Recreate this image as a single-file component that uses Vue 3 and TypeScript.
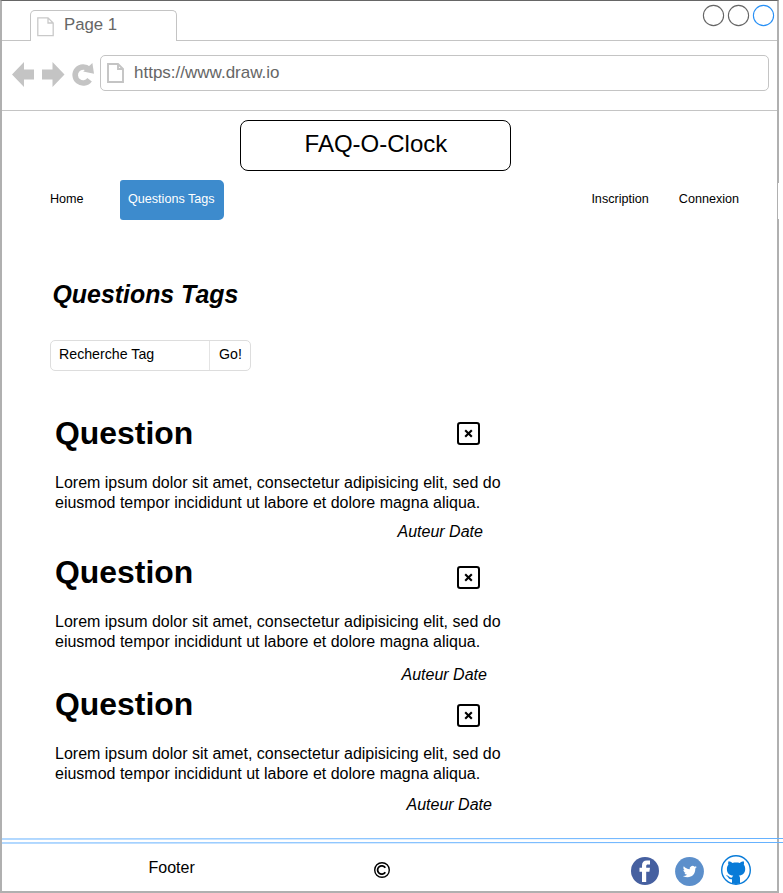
<script setup lang="ts">
interface Question {
  title: string
  body: string
  author: string
}

const body =
  'Lorem ipsum dolor sit amet, consectetur adipisicing elit, sed do eiusmod tempor incididunt ut labore et dolore magna aliqua.'

const questions: Question[] = [
  { title: 'Question', body, author: 'Auteur Date' },
  { title: 'Question', body, author: 'Auteur Date' },
  { title: 'Question', body, author: 'Auteur Date' },
]
</script>

<template>
  <div class="window">
    <header class="tabs">
      <div class="tab">
        <svg class="page-icon" width="17" height="20" viewBox="0 0 17 20">
          <path d="M.8.8H11L16.2 6V18.7H.8ZM11 .8V6H16.2" fill="none" stroke="#c9c9c9" stroke-width="1.3" />
        </svg>
        <span class="tab-title">Page 1</span>
      </div>
      <svg class="controls" width="73" height="28" viewBox="0 0 73 28">
        <g fill="none" stroke-width="1.1">
          <circle cx="11.5" cy="14.5" r="10.1" stroke="#666" />
          <circle cx="36.5" cy="14.5" r="10.1" stroke="#666" />
          <circle cx="61.5" cy="14.5" r="10.1" stroke="#2890f5" />
        </g>
      </svg>
    </header>

    <div class="toolbar">
      <svg class="nav-icons" width="84" height="26" viewBox="0 0 84 26">
        <g fill="#c4c4c4">
          <path d="M0 12.5 12 0V7.5H22V17.5H12V25Z" />
          <path d="M52.5 12.5 40.5 0V7.5H30V17.5H40.5V25Z" />
        </g>
        <path d="M76.8 7.3A8 8 0 1 0 77.6 17.8" fill="none" stroke="#c4c4c4" stroke-width="5.6" />
        <path d="M80.4 1 82 11.7 71.2 9.6Z" fill="#c4c4c4" />
      </svg>
      <div class="address">
        <svg class="page-icon" width="17" height="20" viewBox="0 0 17 20">
          <path d="M1 1H11L16 6V19H1ZM11 1V6H16" fill="none" stroke="#c4c4c4" stroke-width="1.9" />
        </svg>
        <span class="url">https://www.draw.io</span>
      </div>
    </div>

    <div class="brand">FAQ-O-Clock</div>

    <nav class="menu">
      <a class="home">Home</a>
      <a class="active">Questions Tags</a>
      <a class="signup">Inscription</a>
      <a class="login">Connexion</a>
      <i class="menu-end"></i>
    </nav>

    <main class="content">
      <h1>Questions Tags</h1>
      <div class="search">
        <span class="field">Recherche Tag</span>
        <span class="go">Go!</span>
      </div>
      <article v-for="(q, i) in questions" :key="i" class="question">
        <div class="head">
          <h2>{{ q.title }}</h2>
          <svg class="close" width="24" height="24" viewBox="0 0 24 24">
            <rect x="1" y="1" width="21" height="21" rx="2.2" fill="none" stroke="#000" stroke-width="2" />
            <path d="M8.2 8.2 14.8 14.8M14.8 8.2 8.2 14.8" stroke="#000" stroke-width="2.1" />
          </svg>
        </div>
        <p class="text">{{ q.body }}</p>
        <p class="author">{{ q.author }}</p>
      </article>
    </main>

    <footer class="footer">
      <svg class="rule" width="782" height="8" viewBox="0 0 782 8">
        <path d="M0 2 782 1.5M0 6 782 5.5" stroke="#66b2ff" stroke-width="1" />
      </svg>
      <div class="foot-row">
        <span class="foot-label">Footer</span>
        <svg class="copyright" width="18" height="18" viewBox="0 0 18 18">
          <g fill="none" stroke="#000">
            <circle cx="9" cy="9" r="7.3" stroke-width="1.4" />
            <path d="M12.3 6.7A4.2 4.2 0 1 0 12.3 11.3" stroke-width="1.8" />
          </g>
        </svg>
        <svg class="social facebook" width="28" height="28" viewBox="0 0 28 28">
          <circle cx="14" cy="14" r="14" fill="#4660a0" />
          <path d="M11 25V14.7H8.5V10.8H11V8.5C11 5 12.8 3.5 15.8 3.5H19V7.4H17C15.6 7.4 15.2 8 15.2 9.2V10.8H19L18.4 14.7H15.2V25Z" fill="#fff" />
        </svg>
        <svg class="social twitter" width="29" height="29" viewBox="0 0 29 29">
          <circle cx="14.5" cy="14.5" r="14.4" fill="#5c8fcb" />
          <path d="M21.8 10.1c-.6.3-1 .4-1.6.5.6-.4 1-.9 1.2-1.6-.6.3-1.2.6-1.8.7a2.9 2.9 0 0 0-4.9 2.6c-2.4-.1-4.5-1.3-5.9-3-.8 1.5-.4 3 .9 3.9-.5 0-.9-.1-1.3-.4 0 1.5 1 2.6 2.3 2.9-.4.1-.9.1-1.3 0 .4 1.2 1.4 1.9 2.7 2-1.2.9-2.6 1.3-4.3 1.2 5.9 3.5 12.7.2 12.5-7.3.6-.4 1.1-.9 1.5-1.5Z" fill="#fff" />
        </svg>
        <svg class="social github" width="30" height="30" viewBox="0 0 30 30">
          <circle cx="15" cy="15" r="14.3" fill="#fff" stroke="#087bd8" stroke-width="1.4" />
          <path d="M11 28.3V24.2C8.4 24.7 7.6 23.2 6.9 22 6.4 21.2 5.6 21 5.3 20.4 7.4 19.9 8.3 22.8 10.1 22.8 10.7 22.8 11.2 22.6 11.4 22 11.6 21.3 11.9 21 12.3 20.6 8.1 20.2 5.9 18.1 5.9 13.9 5.9 12.2 6.5 10.9 7.4 9.8 7 8.7 7.1 7.4 7.6 6.3 9 6.3 10.2 7.1 11.4 7.9 13.8 7.3 16.5 7.3 18.8 7.9 20 7.1 21.2 6.3 22.6 6.3 23.1 7.4 23.2 8.7 22.8 9.8 23.7 10.9 24.2 12.2 24.2 13.9 24.2 18.1 21.8 20.2 17.7 20.6 18.6 21.3 19 22 19 23.3V28.3C16.5 29.2 13.5 29.2 11 28.3Z" fill="#087bd8" />
        </svg>
      </div>
    </footer>
  </div>
</template>

<style>
body {
  background: #fff;
}
</style>

<style scoped>
.window {
  box-sizing: border-box;
  display: flex;
  flex-direction: column;
  width: 779px;
  height: 893px;
  border: 2px solid #b0b0b0;
  border-top: 1px solid #666;
  background: #fff;
  color: #000;
  font-family: 'Liberation Sans', Arial, sans-serif;
}

.tabs {
  box-sizing: border-box;
  display: flex;
  justify-content: space-between;
  height: 40px;
  padding-left: 28px;
  border-bottom: 1px solid #c4c4c4;
}

.tab {
  box-sizing: border-box;
  display: flex;
  width: 147px;
  height: 31px;
  margin-top: 9px;
  padding: 6px 0 0 6px;
  border: 1px solid #c4c4c4;
  border-bottom: 0;
  border-radius: 5px 5px 0 0;
  background: #fff;
}

.tab-title {
  margin-top: -2px;
  margin-left: 10px;
  font-size: 16.8px;
  line-height: 20px;
  color: #666;
}

.controls {
  margin-right: 2px;
}

.toolbar {
  box-sizing: border-box;
  display: flex;
  height: 70px;
  padding: 14px 8px 0 10px;
  border-bottom: 1px solid #c4c4c4;
}

.nav-icons {
  margin-top: 7px;
}

.address {
  box-sizing: border-box;
  display: flex;
  flex: 1;
  height: 36px;
  margin-left: 4px;
  padding: 7px 0 0 6px;
  border: 1px solid #c4c4c4;
  border-radius: 5px;
}

.url {
  margin-left: 10px;
  font-size: 17px;
  line-height: 20px;
  color: #666;
}

.brand {
  box-sizing: border-box;
  width: 271px;
  height: 51px;
  margin: 9px 0 0 238.4px;
  border: 1px solid #000;
  border-radius: 8px;
  font-size: 24px;
  line-height: 46px;
  text-align: center;
}

.menu {
  display: flex;
  height: 40px;
  margin-top: 9px;
  margin-right: -2px;
  padding-left: 48px;
  font-size: 12.6px;
  line-height: 38px;
}

.home {
  width: 70px;
}

.active {
  box-sizing: border-box;
  width: 104px;
  padding-left: 8px;
  border-radius: 3px 5px 5px 3px;
  background: #3d8bcd;
  color: #fff;
}

.signup {
  margin-left: auto;
}

.login {
  margin-left: 30px;
}

.menu-end {
  width: 1px;
  height: 36px;
  margin: 3px 0 0 39px;
  background: #fff;
}

.content {
  padding-left: 48px;
}

h1 {
  margin: 60px 0 0 2.5px;
  font-size: 24.9px;
  font-style: italic;
  line-height: 28px;
}

.search {
  box-sizing: border-box;
  display: flex;
  width: 201px;
  height: 31px;
  margin-top: 32px;
  border: 1px solid #ddd;
  border-radius: 5px;
  font-size: 14.2px;
  line-height: 27px;
}

.field {
  width: 150px;
  padding-left: 8px;
  border-right: 1px solid #e4e4e4;
}

.go {
  padding-left: 9px;
}

.question {
  box-sizing: border-box;
  width: 460px;
  height: 139px;
  padding-left: 5px;
}

.search + .question {
  margin-top: 44px;
}

.question:last-child {
  margin-top: -7px;
}

.head {
  display: flex;
  height: 37px;
}

h2 {
  width: 402px;
  margin: 0;
  font-size: 31.9px;
  line-height: 37px;
}

.close {
  margin-top: 7px;
}

.question:nth-of-type(2) .close {
  margin-top: 12px;
}

.question:nth-of-type(3) .close {
  margin-top: 18px;
}

.text {
  width: 452px;
  margin: 21px 0 0;
  font-size: 16px;
  line-height: 20px;
}

.author {
  margin: 9px 0 0 342.5px;
  font-size: 16px;
  font-style: italic;
  line-height: 20px;
}

.question:nth-of-type(2) .author {
  margin: 13px 0 0 346.5px;
}

.question:nth-of-type(3) .author {
  margin: 11px 0 0 351.5px;
}

.footer {
  width: 782px;
  height: 54px;
  margin-top: auto;
}

.rule {
  position: relative;
  display: block;
}

.foot-row {
  display: flex;
  padding-left: 146.5px;
}

.foot-label {
  width: 224.5px;
  margin-top: 13px;
  font-size: 16px;
  line-height: 20px;
}

.copyright {
  margin-top: 16px;
}

.facebook {
  margin: 12px 0 0 240px;
}

.twitter {
  margin: 12px 0 0 16px;
}

.github {
  margin: 10px 0 0 17px;
}
</style>
